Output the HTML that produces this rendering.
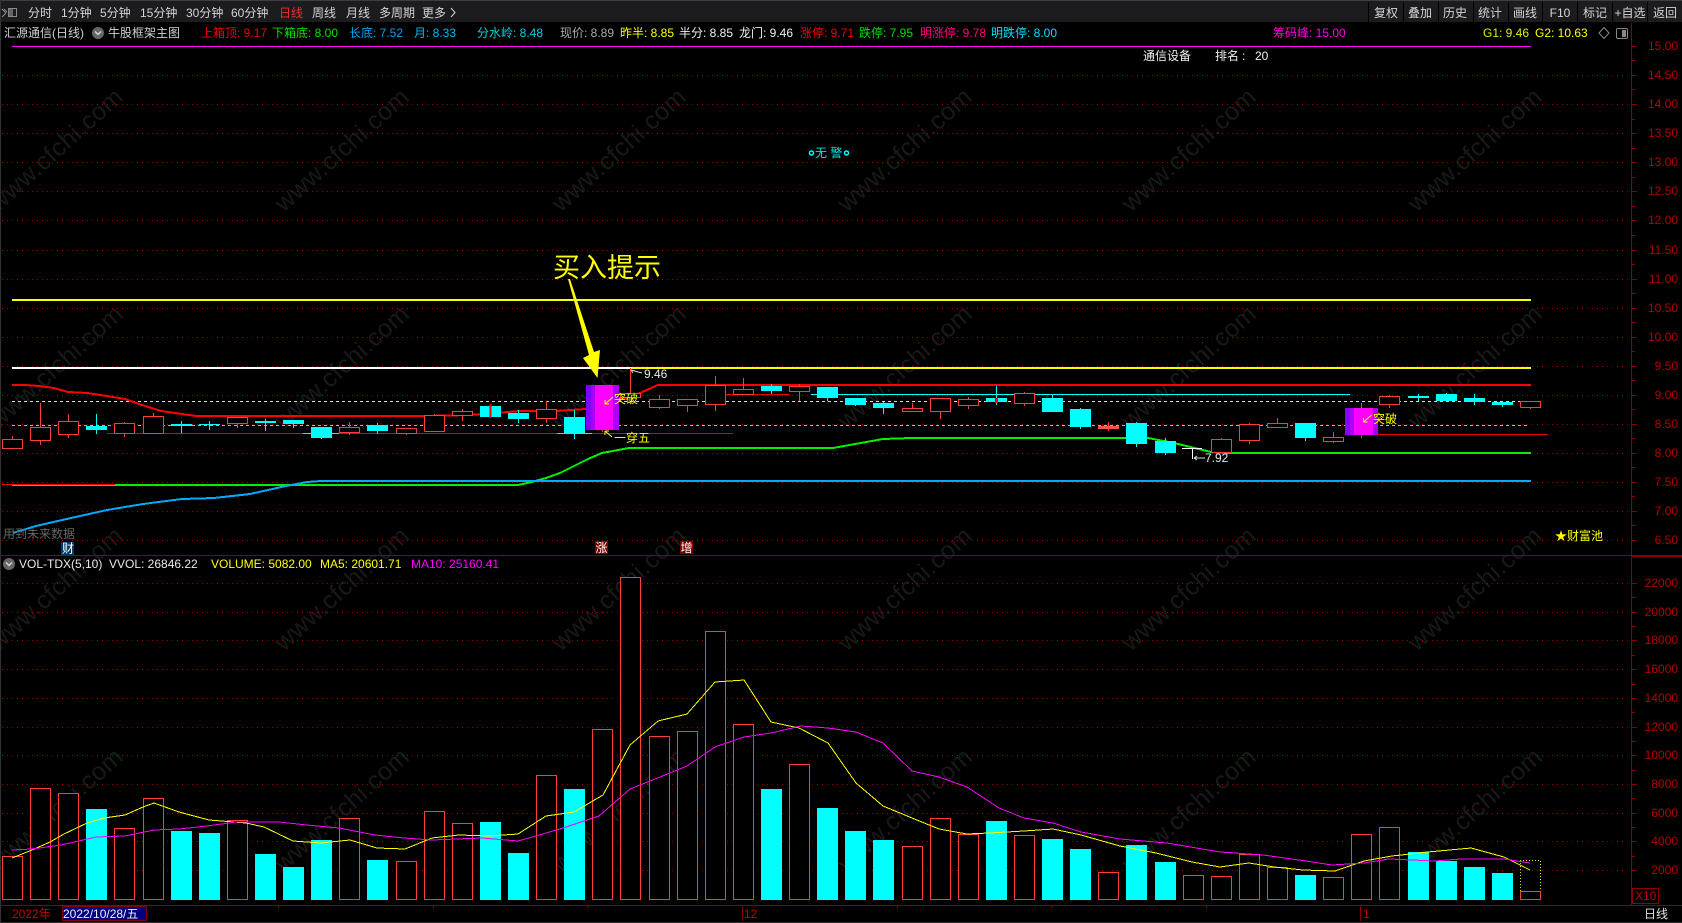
<!DOCTYPE html>
<html lang="zh">
<head>
<meta charset="utf-8">
<title>汇源通信 日线</title>
<style>
html,body{margin:0;padding:0;background:#000;width:1682px;height:923px;overflow:hidden}
svg{display:block;position:absolute;left:0;top:0}
text{font-family:"Liberation Sans","Noto Sans CJK SC",sans-serif;font-size:12px}
.ax text{fill:#b00000;text-anchor:end}
.tb text{fill:#d4d4d4}
.tc text{fill:#d4d4d4;text-anchor:middle}
.wm text{fill:#191919;font-size:25px;letter-spacing:.4px}
.cr{shape-rendering:crispEdges}
.r rect{fill:#000;stroke:#ff3c3c;stroke-width:1}
.r path{stroke:#ff3c3c;stroke-width:1;fill:none}
.c rect{fill:#0ff;stroke:none}
.c path{stroke:#0ff;stroke-width:1;fill:none}
</style>
</head>
<body>
<svg width="1682" height="923" viewBox="0 0 1682 923" xmlns="http://www.w3.org/2000/svg">
<rect width="1682" height="923" fill="#000"/>

<!-- watermarks -->
<g class="wm">
<text transform="translate(-2,213) rotate(-42)">www.cfchi.com</text>
<text transform="translate(284,213) rotate(-42)">www.cfchi.com</text>
<text transform="translate(561,213) rotate(-42)">www.cfchi.com</text>
<text transform="translate(847,213) rotate(-42)">www.cfchi.com</text>
<text transform="translate(1131,213) rotate(-42)">www.cfchi.com</text>
<text transform="translate(1417,213) rotate(-42)">www.cfchi.com</text>
<text transform="translate(-2,430) rotate(-42)">www.cfchi.com</text>
<text transform="translate(284,430) rotate(-42)">www.cfchi.com</text>
<text transform="translate(561,430) rotate(-42)">www.cfchi.com</text>
<text transform="translate(847,430) rotate(-42)">www.cfchi.com</text>
<text transform="translate(1131,430) rotate(-42)">www.cfchi.com</text>
<text transform="translate(1417,430) rotate(-42)">www.cfchi.com</text>
<text transform="translate(-2,652) rotate(-42)">www.cfchi.com</text>
<text transform="translate(284,652) rotate(-42)">www.cfchi.com</text>
<text transform="translate(561,652) rotate(-42)">www.cfchi.com</text>
<text transform="translate(847,652) rotate(-42)">www.cfchi.com</text>
<text transform="translate(1131,652) rotate(-42)">www.cfchi.com</text>
<text transform="translate(1417,652) rotate(-42)">www.cfchi.com</text>
<text transform="translate(-2,873) rotate(-42)">www.cfchi.com</text>
<text transform="translate(284,873) rotate(-42)">www.cfchi.com</text>
<text transform="translate(561,873) rotate(-42)">www.cfchi.com</text>
<text transform="translate(847,873) rotate(-42)">www.cfchi.com</text>
<text transform="translate(1131,873) rotate(-42)">www.cfchi.com</text>
<text transform="translate(1417,873) rotate(-42)">www.cfchi.com</text>
</g>

<!-- grid -->
<path class="cr" fill="none" stroke="#990000" stroke-width="1" stroke-dasharray="1 4" d="M2 75.5H1631M2 104.5H1631M2 133.5H1631M2 162.5H1631M2 191.5H1631M2 220.5H1631M2 250.5H1631M2 279.5H1631M2 308.5H1631M2 337.5H1631M2 366.5H1631M2 395.5H1631M2 424.5H1631M2 453.5H1631M2 482.5H1631M2 511.5H1631M2 540.5H1631M2 583.5H1631M2 612.5H1631M2 640.5H1631M2 669.5H1631M2 698.5H1631M2 727.5H1631M2 755.5H1631M2 784.5H1631M2 813.5H1631M2 841.5H1631M2 870.5H1631"/>

<!-- toolbar -->
<rect x="0" y="0" width="1682" height="23" fill="#1c1c1e"/>
<rect x="0" y="0" width="1682" height="1" fill="#3c3c42"/>
<rect x="0" y="22" width="1682" height="1" fill="#000"/>
<rect x="0" y="0" width="1" height="923" fill="#333"/>
<path class="cr" stroke="#000" stroke-width="1" d="M1368.5 2V22M1403.5 2V22M1438.5 2V22M1473.5 2V22M1508.5 2V22M1542.5 2V22M1577.5 2V22M1612.5 2V22M1647.5 2V22"/>
<g fill="none" stroke="#8a8a8a" stroke-width="1">
<path d="M2 9l4 4-4 4M4 9l3 3"/>
<rect x="8.5" y="8.5" width="8" height="8"/>
</g>
<rect x="9" y="9" width="4" height="7" fill="#666"/>
<g class="tb">
<text x="28" y="17">分时</text>
<text x="61" y="17">1分钟</text>
<text x="100" y="17">5分钟</text>
<text x="140" y="17">15分钟</text>
<text x="186" y="17">30分钟</text>
<text x="231" y="17">60分钟</text>
<text x="279" y="17" style="fill:#e83030">日线</text>
<text x="312" y="17">周线</text>
<text x="346" y="17">月线</text>
<text x="379" y="17">多周期</text>
<text x="422" y="17">更多</text>
<path d="M451 8l4 4.5-4 4.5" fill="none" stroke="#d4d4d4" stroke-width="1"/>
</g>
<g class="tc">
<text x="1386" y="17">复权</text>
<text x="1420" y="17">叠加</text>
<text x="1455" y="17">历史</text>
<text x="1490" y="17">统计</text>
<text x="1525" y="17">画线</text>
<text x="1560" y="17">F10</text>
<text x="1595" y="17">标记</text>
<text x="1630" y="17">+自选</text>
<text x="1665" y="17">返回</text>
</g>

<!-- info row -->
<text x="4" y="37" fill="#d0d0d0">汇源通信(日线)</text>
<circle cx="98" cy="33" r="6" fill="#666"/>
<path d="M95 31.5l3 3 3-3" fill="none" stroke="#ddd" stroke-width="1.3"/>
<text x="108" y="37" fill="#d0d0d0">牛股框架主图</text>
<text x="201" y="37" fill="#f00000">上箱顶: 9.17</text>
<text x="272" y="37" fill="#00e000">下箱底: 8.00</text>
<text x="349" y="37" fill="#00a0f0">长底: 7.52</text>
<text x="414" y="37" fill="#00b8f0">月: 8.33</text>
<text x="477" y="37" fill="#00d0e0">分水岭: 8.48</text>
<text x="560" y="37" fill="#aaaaaa">现价: 8.89</text>
<text x="620" y="37" fill="#ffff00">昨半: 8.85</text>
<text x="679" y="37" fill="#f0f0f0">半分: 8.85</text>
<text x="739" y="37" fill="#f0f0f0">龙门: 9.46</text>
<text x="800" y="37" fill="#f00000">涨停: 9.71</text>
<text x="859" y="37" fill="#00e000">跌停: 7.95</text>
<text x="920" y="37" fill="#ff0080">明涨停: 9.78</text>
<text x="991" y="37" fill="#00e0ff">明跌停: 8.00</text>
<text x="1273" y="37" fill="#ff00e0">筹码峰: 15.00</text>
<text x="1483" y="37" fill="#e0f000">G1: 9.46</text>
<text x="1535" y="37" fill="#ffff00">G2: 10.63</text>
<path d="M1604 27.5l5 5.5-5 5.5-5-5.5z" fill="none" stroke="#888" stroke-width="1"/>
<rect x="1616.5" y="28.5" width="11" height="10" rx="1.5" fill="none" stroke="#888" stroke-width="1"/>
<rect x="1622" y="30" width="4" height="7" fill="#888"/>
<rect class="cr" x="12" y="46" width="1519" height="1" fill="#ff00ff"/>
<text x="1143" y="60" fill="#f0f0f0">通信设备</text>
<text x="1215" y="60" fill="#f0f0f0">排名</text>
<text x="1242" y="60" fill="#f0f0f0">:</text>
<text x="1255" y="60" fill="#f0f0f0">20</text>

<!-- axis -->
<g class="cr">
<rect x="1631" y="23" width="1" height="882" fill="#8a0000"/>
<rect x="1631" y="555" width="51" height="2" fill="#8a0000"/>
<rect x="0" y="555" width="1631" height="1" fill="#8a0000"/>
<rect x="0" y="905" width="1682" height="1" fill="#8a0000"/>
<path fill="none" stroke="#8a0000" d="M1632 46.5h5M1632 75.5h5M1632 104.5h5M1632 133.5h5M1632 162.5h5M1632 191.5h5M1632 220.5h5M1632 250.5h5M1632 279.5h5M1632 308.5h5M1632 337.5h5M1632 366.5h5M1632 395.5h5M1632 424.5h5M1632 453.5h5M1632 482.5h5M1632 511.5h5M1632 540.5h5M1632 60.5h3M1632 89.5h3M1632 119.5h3M1632 148.5h3M1632 177.5h3M1632 206.5h3M1632 235.5h3M1632 264.5h3M1632 293.5h3M1632 322.5h3M1632 351.5h3M1632 380.5h3M1632 409.5h3M1632 438.5h3M1632 467.5h3M1632 496.5h3M1632 525.5h3M1632 583.5h5M1632 612.5h5M1632 640.5h5M1632 669.5h5M1632 698.5h5M1632 727.5h5M1632 755.5h5M1632 784.5h5M1632 813.5h5M1632 841.5h5M1632 870.5h5M1632 597.5h3M1632 626.5h3M1632 655.5h3M1632 684.5h3M1632 712.5h3M1632 741.5h3M1632 770.5h3M1632 798.5h3M1632 827.5h3M1632 856.5h3"/>
</g>
<g class="ax">
<text x="1678" y="50">15.00</text><text x="1678" y="79">14.50</text><text x="1678" y="108">14.00</text><text x="1678" y="137">13.50</text><text x="1678" y="166">13.00</text><text x="1678" y="195">12.50</text><text x="1678" y="224">12.00</text><text x="1678" y="254">11.50</text><text x="1678" y="283">11.00</text><text x="1678" y="312">10.50</text><text x="1678" y="341">10.00</text><text x="1678" y="370">9.50</text><text x="1678" y="399">9.00</text><text x="1678" y="428">8.50</text><text x="1678" y="457">8.00</text><text x="1678" y="486">7.50</text><text x="1678" y="515">7.00</text><text x="1678" y="544">6.50</text>
<text x="1678" y="587">22000</text><text x="1678" y="616">20000</text><text x="1678" y="644">18000</text><text x="1678" y="673">16000</text><text x="1678" y="702">14000</text><text x="1678" y="731">12000</text><text x="1678" y="759">10000</text><text x="1678" y="788">8000</text><text x="1678" y="817">6000</text><text x="1678" y="845">4000</text><text x="1678" y="874">2000</text>
</g>

<!-- main lines -->
<g class="cr" fill="none">
<path d="M12 300H1531" stroke="#ffff00" stroke-width="2"/>
<path d="M12 368H632" stroke="#fff" stroke-width="2"/>
<path d="M632 368H1531" stroke="#ffff00" stroke-width="2"/>
<path d="M12 401.5H1531" stroke="#ddd" stroke-width="1" stroke-dasharray="3 3"/>
<path d="M12 425.5H1527" stroke="#0ff" stroke-width="1" stroke-dasharray="3 3"/>
<path d="M107 433.5H733M1346 434.5H1548M726 394.5H790" stroke="#f00000" stroke-width="1"/>
<path d="M811 394.5H1350M303 433.5H339M557 433.5H592" stroke="#0ff" stroke-width="1"/>
<polyline stroke="#ff0000" stroke-width="2" points="12,385 25,385 39,386 54,388 68,392 87,393 107,396 125,399 139,404 161,411 182,414 196,416 425,416 470,415 520,411 556,411 586,409 625,398 640,393 658,385 1531,385"/>
<polyline stroke="#00f000" stroke-width="2" points="12,485 518,485 532,482 546,478 560,473 588,459 602,453 629,448 833,448 883,439 911,438 1148,438 1174,443 1211,452 1230,453 1531,453"/>
<path d="M2 484.5H115" stroke="#f00000" stroke-width="1"/>
<polyline stroke="#00aaff" stroke-width="2" points="13,533 36,526 71,518 107,510 143,504 182,499 214,498 250,494 286,486 307,482 321,481 1531,481"/>
</g>

<!-- candles -->
<g class="cr">
<g class="r">
<rect x="2.5" y="439.5" width="20" height="9"/><path d="M12.5 436V439M12.5 448V449"/>
<rect x="30.5" y="427.5" width="20" height="13"/><path d="M40.5 403V427M40.5 440V445"/>
<rect x="58.5" y="421.5" width="20" height="13"/><path d="M68.5 414V421M68.5 434V438"/>
<rect x="114.5" y="423.5" width="20" height="10"/><path d="M124.5 422V423M124.5 433V437"/>
<rect x="143.5" y="416.5" width="20" height="17"/><path d="M153.5 413V416"/>
<rect x="227.5" y="417.5" width="20" height="6"/><path d="M237.5 423V428"/>
<rect x="339.5" y="427.5" width="20" height="5"/><path d="M349.5 422V427M349.5 432V435"/>
<rect x="396.5" y="428.5" width="20" height="5"/><path d="M406.5 433V435"/>
<rect x="424.5" y="415.5" width="20" height="16"/><path d="M434.5 414V415"/>
<rect x="452.5" y="411.5" width="20" height="4"/><path d="M462.5 409V411M462.5 415V421"/>
<rect x="536.5" y="409.5" width="20" height="9"/><path d="M546.5 401V409M546.5 418V423"/>
</g>
<g class="c">
<rect x="86" y="426" width="21" height="4"/><path d="M96.5 414V434"/>
<rect x="171" y="424" width="21" height="2"/><path d="M181.5 421V433"/>
<rect x="199" y="424" width="21" height="1"/><path d="M209.5 421V430"/>
<rect x="255" y="421" width="21" height="2"/><path d="M265.5 419V431"/>
<rect x="283" y="420" width="21" height="4"/><path d="M293.5 420V428"/>
<rect x="311" y="427" width="21" height="11"/><path d="M321.5 427V439"/>
<rect x="367" y="425" width="21" height="6"/><path d="M377.5 423V434"/>
<rect x="480" y="406" width="21" height="11"/>
<rect x="508" y="413" width="21" height="6"/><path d="M518.5 410V423"/>
<rect x="564" y="417" width="21" height="16"/><path d="M574.5 410V439"/>
</g>
<path d="M490.5 404V418" stroke="#f00000" stroke-width="2" fill="none"/>

<path d="M602.5 430V432" stroke="#ff3c3c" fill="none"/>
<rect x="586" y="385" width="5" height="45" fill="#8000ff"/>
<rect x="591" y="385" width="4" height="45" fill="#a800ff"/>
<rect x="595" y="385" width="18" height="45" fill="#ff00ff"/>
<rect x="613" y="385" width="6" height="45" fill="#a800ff"/>

<g class="r">
<rect x="620.5" y="393.5" width="20" height="4"/><path d="M630.5 368V393"/>
<rect x="649.5" y="399.5" width="20" height="8"/><path d="M659.5 395V399M659.5 407V409"/>
<rect x="677.5" y="399.5" width="20" height="6"/><path d="M687.5 405V412"/>
<rect x="705.5" y="385.5" width="20" height="19"/><path d="M715.5 376V385M715.5 404V411"/>
<rect x="733.5" y="389.5" width="20" height="5"/><path d="M743.5 378V389"/>
<rect x="789.5" y="386.5" width="20" height="5"/><path d="M799.5 384V386M799.5 391V401"/>
<rect x="902.5" y="408.5" width="20" height="3"/><path d="M912.5 403V408"/>
<rect x="930.5" y="398.5" width="20" height="13"/><path d="M940.5 411V419"/>
<rect x="958.5" y="399.5" width="20" height="6"/><path d="M968.5 397V399M968.5 405V409"/>
<rect x="1014.5" y="393.5" width="20" height="10"/><path d="M1024.5 392V393M1024.5 403V406"/>
<path d="M1108.5 422V431" />
<rect x="1211.5" y="439.5" width="20" height="13"/><path d="M1221.5 438V439"/>
<rect x="1239.5" y="424.5" width="20" height="16"/><path d="M1249.5 423V424M1249.5 440V444"/>
<rect x="1267.5" y="423.5" width="20" height="4"/><path d="M1277.5 418V423M1277.5 427V428"/>
<rect x="1323.5" y="437.5" width="20" height="4"/><path d="M1333.5 432V437M1333.5 441V443"/>
<path d="M1361.5 403V438"/>
<rect x="1379.5" y="396.5" width="20" height="8"/><path d="M1389.5 395V396M1389.5 404V408"/>
<rect x="1520.5" y="401.5" width="20" height="6"/><path d="M1530.5 407V409"/>
</g>
<rect x="1098" y="426" width="21" height="3" fill="#ff5050"/>
<g class="c">
<rect x="761" y="386" width="21" height="5"/><path d="M771.5 384V394"/>
<rect x="817" y="387" width="21" height="11"/><path d="M827.5 387V401"/>
<rect x="845" y="398" width="21" height="7"/><path d="M855.5 398V406"/>
<rect x="873" y="403" width="21" height="5"/><path d="M883.5 402V414"/>
<rect x="986" y="398" width="21" height="4"/><path d="M996.5 386V405"/>
<rect x="1042" y="398" width="21" height="14"/><path d="M1052.5 394V412"/>
<rect x="1070" y="409" width="21" height="18"/><path d="M1080.5 408V429"/>
<rect x="1126" y="423" width="21" height="21"/><path d="M1136.5 422V447"/>
<rect x="1155" y="441" width="21" height="12"/><path d="M1165.5 438V455"/>
<rect x="1295" y="423" width="21" height="15"/><path d="M1305.5 423V441"/>
<rect x="1408" y="396" width="21" height="2"/><path d="M1418.5 394V401"/>
<rect x="1436" y="394" width="21" height="7"/><path d="M1446.5 393V401"/>
<rect x="1464" y="398" width="21" height="4"/><path d="M1474.5 394V405"/>
<rect x="1492" y="402" width="21" height="3"/><path d="M1502.5 402V407"/>
</g>
<rect x="995" y="398" width="3" height="5" fill="#f00000"/>
<rect x="1345" y="408" width="5" height="27" fill="#8a00ff"/>
<rect x="1350" y="408" width="4" height="27" fill="#b000ff"/>
<rect x="1354" y="408" width="19" height="27" fill="#ff00ff"/>
<rect x="1373" y="408" width="5" height="27" fill="#a000ff"/>
<path d="M1182 448.5H1202M1192.5 448V459" stroke="#fff" fill="none"/>
</g>

<!-- annotations -->
<text x="553" y="277" style="font-size:27px" fill="#ffff00">买入提示</text>
<polygon points="568,279 570,279 594,352 600,350 597.5,378 583,358 589,355" fill="#ffff00"/>
<circle cx="811.5" cy="153" r="2" fill="none" stroke="#0ff" stroke-width="1.5"/>
<text x="815" y="157" fill="#00e8e8">无 警</text>
<circle cx="846.5" cy="153" r="2" fill="none" stroke="#0ff" stroke-width="1.5"/>
<path d="M631 370l11 3M631 370l4 1M631 370l2 3" stroke="#ddd" fill="none"/>
<text x="644" y="378" fill="#e0e8f0">9.46</text>
<path d="M605 404l8-7M605 404h4M605 404v-4" stroke="#ffff00" fill="none"/>
<text x="614" y="403" fill="#ffff00">突破</text>
<path d="M605 431l7 6M605 431h4M605 431v4" stroke="#ffff00" fill="none"/>
<text x="614" y="442" fill="#ffff00">一穿五</text>
<path d="M1363.5 422l8-7M1363.5 422h4M1363.5 422v-4" stroke="#ffff00" fill="none"/>
<text x="1373" y="423" fill="#ffff00">突破</text>
<path d="M1194 458h11M1194 458l3 2M1194 458l3-2" stroke="#ddd" fill="none"/>
<text x="1205" y="462" fill="#e0e8f0">7.92</text>
<text x="1555" y="540" fill="#ffff00">★财富池</text>
<text x="3" y="538" fill="#666">用到未来数据</text>
<rect x="61" y="542" width="13" height="13" fill="#003a6a"/>
<text x="62" y="552.5" fill="#fff">财</text>
<rect x="595" y="541" width="13" height="13" fill="#800000"/>
<text x="595.5" y="552" fill="#fff">涨</text>
<rect x="680" y="541" width="13" height="13" fill="#800000"/>
<text x="680.5" y="552" fill="#fff">增</text>

<!-- vol header -->
<circle cx="9" cy="564" r="6" fill="#666"/>
<path d="M6 562.5l3 3 3-3" fill="none" stroke="#ddd" stroke-width="1.3"/>
<text x="19" y="568" fill="#e8e8e8">VOL-TDX(5,10)</text>
<text x="109" y="568" fill="#e8e8e8">VVOL: 26846.22</text>
<text x="211" y="568" fill="#ffff00">VOLUME: 5082.00</text>
<text x="320" y="568" fill="#ffff00">MA5: 20601.71</text>
<text x="411" y="568" fill="#ff00ff">MA10: 25160.41</text>

<!-- volume bars -->
<g class="cr">
<g class="r">
<rect x="2.5" y="856.5" width="20" height="43"/>
<rect x="30.5" y="788.5" width="20" height="111"/>
<rect x="58.5" y="793.5" width="20" height="106"/>
<rect x="114.5" y="828.5" width="20" height="71"/>
<rect x="143.5" y="798.5" width="20" height="101"/>
<rect x="227.5" y="820.5" width="20" height="79"/>
<rect x="339.5" y="818.5" width="20" height="81"/>
<rect x="396.5" y="861.5" width="20" height="38"/>
<rect x="424.5" y="811.5" width="20" height="88"/>
<rect x="452.5" y="823.5" width="20" height="76"/>
<rect x="536.5" y="775.5" width="20" height="124"/>
<rect x="592.5" y="729.5" width="20" height="170"/>
<rect x="620.5" y="577.5" width="20" height="322"/>
<rect x="649.5" y="736.5" width="20" height="163"/>
<rect x="677.5" y="731.5" width="20" height="168"/>
<rect x="705.5" y="631.5" width="20" height="268"/>
<rect x="733.5" y="724.5" width="20" height="175"/>
<rect x="789.5" y="764.5" width="20" height="135"/>
<rect x="902.5" y="846.5" width="20" height="53"/>
<rect x="930.5" y="818.5" width="20" height="81"/>
<rect x="958.5" y="834.5" width="20" height="65"/>
<rect x="1014.5" y="835.5" width="20" height="64"/>
<rect x="1098.5" y="872.5" width="20" height="27"/>
<rect x="1183.5" y="875.5" width="20" height="24"/>
<rect x="1211.5" y="876.5" width="20" height="23"/>
<rect x="1239.5" y="854.5" width="20" height="45"/>
<rect x="1267.5" y="867.5" width="20" height="32"/>
<rect x="1323.5" y="877.5" width="20" height="22"/>
<rect x="1351.5" y="834.5" width="20" height="65"/>
<rect x="1379.5" y="827.5" width="20" height="72"/>
<rect x="1520.5" y="891.5" width="20" height="8"/>
</g>
<g class="c">
<rect x="86" y="809" width="21" height="91"/>
<rect x="171" y="831" width="21" height="69"/>
<rect x="199" y="833" width="21" height="67"/>
<rect x="255" y="854" width="21" height="46"/>
<rect x="283" y="867" width="21" height="33"/>
<rect x="311" y="840" width="21" height="60"/>
<rect x="367" y="860" width="21" height="40"/>
<rect x="480" y="822" width="21" height="78"/>
<rect x="508" y="853" width="21" height="47"/>
<rect x="564" y="789" width="21" height="111"/>
<rect x="761" y="789" width="21" height="111"/>
<rect x="817" y="808" width="21" height="92"/>
<rect x="845" y="831" width="21" height="69"/>
<rect x="873" y="840" width="21" height="60"/>
<rect x="986" y="821" width="21" height="79"/>
<rect x="1042" y="839" width="21" height="61"/>
<rect x="1070" y="849" width="21" height="51"/>
<rect x="1126" y="845" width="21" height="55"/>
<rect x="1155" y="862" width="21" height="38"/>
<rect x="1295" y="875" width="21" height="25"/>
<rect x="1408" y="852" width="21" height="48"/>
<rect x="1436" y="861" width="21" height="39"/>
<rect x="1464" y="867" width="21" height="33"/>
<rect x="1492" y="873" width="21" height="27"/>
</g>
<path d="M1520.5 891V860.5H1540.5V891" fill="none" stroke="#e0e000" stroke-width="1" stroke-dasharray="1 2"/>
<polyline fill="none" stroke="#ffff00" stroke-width="1" points="12,858 32,850 50,842 64,834 87,823 104,818 125,815 143,807 154,803 179,812 209,820 246,823 264,827 293,841 321,843 350,840 377,848 405,849 432,838 459,835 489,836 518,834 546,816 560,814 574,812 603,795 630,745 658,721 687,714 715,682 744,680 771,722 799,728 828,743 856,783 883,806 912,818 939,829 967,834 989,833 1024,831 1053,829 1081,835 1120,846 1156,853 1192,862 1220,867 1249,863 1274,867 1303,870 1335,871 1364,861 1392,856 1428,852 1471,848 1504,857 1530,870"/>
<polyline fill="none" stroke="#ff00ff" stroke-width="1" points="12,850 32,849 61,845 96,837 125,836 154,830 179,829 207,826 236,822 279,822 307,825 339,828 375,835 404,838 432,840 482,838 518,841 560,829 599,816 630,789 660,777 687,766 715,747 744,737 771,733 801,726 828,728 856,732 883,743 912,771 939,777 967,787 999,808 1024,818 1053,823 1081,832 1120,839 1167,843 1220,852 1263,855 1306,861 1332,865 1364,863 1389,859 1435,861 1461,859 1504,859 1530,863"/>
</g>

<!-- X10 box -->
<rect class="cr" x="1632.5" y="888.5" width="26" height="15" fill="#000" stroke="#8a0000"/>
<text x="1635" y="900" fill="#c00000">X10</text>

<!-- date row -->
<path class="cr" fill="none" stroke="#8a0000" d="M587.5 906v2M278.5 906v2M433.5 906v2M897.5 906v2M1051.5 906v2M1206.5 906v2"/>
<path class="cr" fill="none" stroke="#8a0000" d="M742.5 906V921M1360.5 906V921"/>
<text x="12" y="918" fill="#c00000">2022年</text>
<rect class="cr" x="62.5" y="906.5" width="84" height="14" fill="#000080" stroke="#800000"/>
<text x="63" y="918" fill="#f0f0f0">2022/10/28/五</text>
<text x="744" y="918" fill="#c00000">12</text>
<text x="1363" y="918" fill="#c00000">1</text>
<text x="1644" y="918" fill="#e0e0e0">日线</text>
<rect x="0" y="922" width="1682" height="1" fill="#2c2c2c"/>
</svg>
</body>
</html>
